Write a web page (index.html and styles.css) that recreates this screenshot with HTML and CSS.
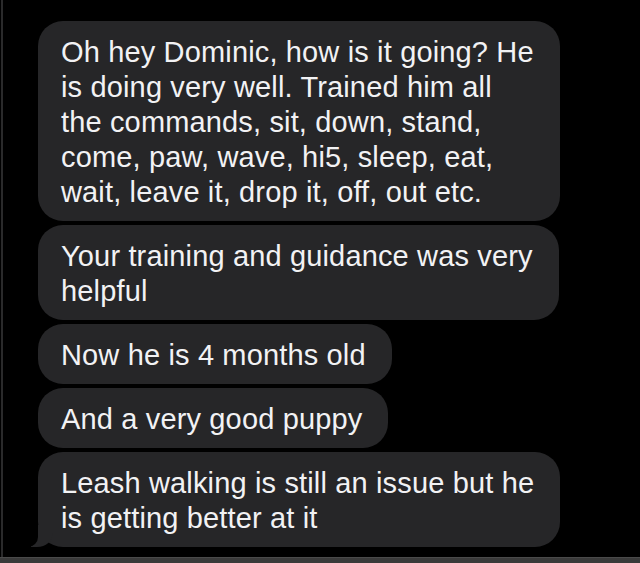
FILE: index.html
```html
<!DOCTYPE html>
<html lang="en">
<head>
<meta charset="utf-8">
<title>Messages</title>
<link rel="stylesheet" href="styles.css">
</head>
<body>
<div class="screen">
  <div class="thread">
    <div class="bubble">Oh hey Dominic, how is it going? He<br>is doing very well. Trained him all<br>the commands, sit, down, stand,<br>come, paw, wave, hi5, sleep, eat,<br>wait, leave it, drop it, off, out etc.</div>
    <div class="bubble">Your training and guidance was very<br>helpful</div>
    <div class="bubble">Now he is 4 months old</div>
    <div class="bubble">And a very good puppy</div>
    <div class="bubble bubble-tail">Leash walking is still an issue but he<br>is getting better at it</div>
  </div>
</div>
<div class="bottom-bar"></div>
</body>
</html>
```

FILE: styles.css
```css
html, body {
  margin: 0;
  padding: 0;
  background: #000;
}

body {
  width: 640px;
  height: 563px;
  overflow: hidden;
  font-family: "Liberation Sans", Arial, sans-serif;
}

.screen {
  height: 557px;
  margin-left: 1px;
  border-left: 2px solid #2a2a2b;
  box-sizing: border-box;
  padding: 21px 0 0 35px;
}

.thread {
  display: flex;
  flex-direction: column;
  align-items: flex-start;
  gap: 4px;
}

.bubble {
  position: relative;
  background: #262628;
  color: #f2f2f4;
  font-size: 29px;
  letter-spacing: 0.15px;
  line-height: 35px;
  padding: 14px 26px 11px 23px;
  border-radius: 25px;
  white-space: nowrap;
}

.bubble-tail::before {
  content: "";
  position: absolute;
  left: -7px;
  bottom: 0;
  width: 22px;
  height: 22px;
  background: #262628;
  border-bottom-right-radius: 16px 14px;
}

.bubble-tail::after {
  content: "";
  position: absolute;
  left: -12px;
  bottom: 0;
  width: 12px;
  height: 24px;
  background: #000;
  border-bottom-right-radius: 10px;
}

.bottom-bar {
  height: 6px;
  background: #3a3a3a;
  border-top: 1px solid #4a4a4a;
}
```
